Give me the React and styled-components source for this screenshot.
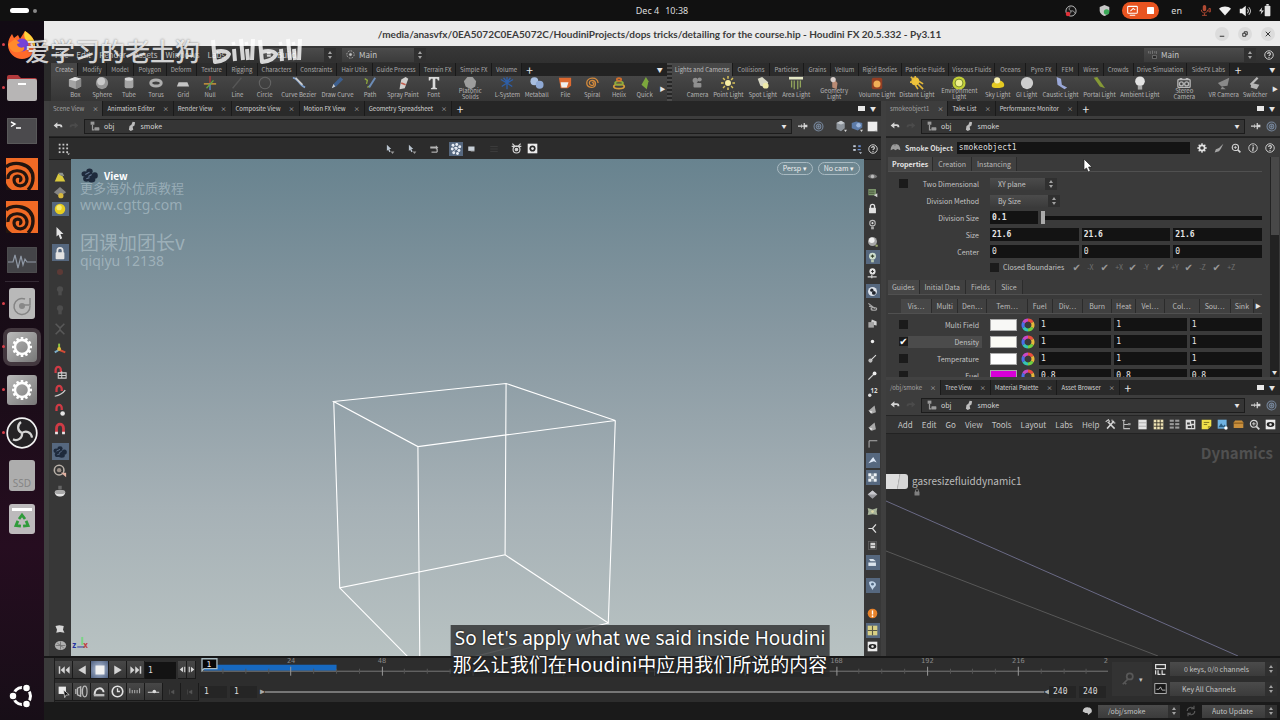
import React from "react";
import styled, { createGlobalStyle, css } from "styled-components";

const Global = createGlobalStyle`
  *, *::before, *::after { box-sizing: border-box; }
  body { margin: 0; background: #1a1a1a; }
  button, input, select { font: inherit; color: inherit; margin: 0; padding: 0; border: 0; border-radius: 0; background: none; }
  button, select { appearance: none; cursor: default; }
  a { color: inherit; text-decoration: none; }
`;

const ui = '"Noto Sans CJK SC", "Noto Sans", sans-serif';
const mono = '"DejaVu Sans Mono", monospace';

/* ---------- icons ---------- */
const L = "#d4d4d4";
const glyphs = {
  back: <path d="M1 7l6-5v3h4c3 0 4 2 4 5h-3c0-2-1-2-2-2H7v4z" fill={L} />,
  fwd: <path d="M15 7L9 2v3H5C2 5 1 7 1 10h3c0-2 1-2 2-2h3v4z" fill="#4b4b4b" />,
  obj: <g fill="#9a9a9a"><rect x="1" y="1" width="6" height="5" /><path d="M3 6v9h4v-2H5V6z" /><rect x="7" y="10" width="8" height="5" rx="1" /></g>,
  smoke: <path d="M9 1l4 1-1 5-3 2 1 5-4 2-3-2 1-6 3-2z" fill="#bdbdbd" />,
  pin: <path d="M0 7h5V5l1 0v2h3V3l2 0v3h4v4h-4v3H9V9H6v2H5V9H0z" fill={L} />,
  target: <g fill="none" stroke="#75859a" strokeWidth="1.6"><circle cx="8" cy="8" r="6.5" /><circle cx="8" cy="8" r="3.4" /><circle cx="8" cy="8" r="1" fill="#b9c6d6" /></g>,
  boxc: <g><path d="M2 4l6-3 5 3v7l-5 4-6-3z" fill="#8d949c" /><path d="M2 4l6 2 5-2-5-3z" fill="#c4c9ce" /><path d="M12 13h4l-2 3z" fill={L} /></g>,
  boxb: <g><path d="M1 4l6-2 8 2v6l-6 4-8-3z" fill="#5c7ba8" /><circle cx="10" cy="7" r="3" fill="#9db7dd" /><path d="M12 13h4l-2 3z" fill={L} /></g>,
  white: <g><rect x="1" y="1" width="14" height="14" fill="#ededed" /><path d="M11 14h5l-2 2z" fill="#888" /></g>,
  grid9: <g fill="#c9c9c9">{[1, 6, 11].map(y => [1, 6, 11].map(x => <rect key={x + "-" + y} x={x} y={y} width="2.4" height="2.4" />))}<path d="M12 14h4l-2 2z" /></g>,
  help: <g><circle cx="8" cy="8" r="6.8" fill="none" stroke={L} strokeWidth="1.5" /><path d="M5.8 6.4C5.8 3.5 10.3 3.7 10.3 6.3 10.3 8 8 7.8 8 9.7" fill="none" stroke={L} strokeWidth="1.8" /><rect x="7.1" y="11" width="1.8" height="1.8" fill={L} /></g>,
  info: <g><circle cx="8" cy="8" r="6.8" fill="none" stroke={L} strokeWidth="1.4" /><rect x="7.2" y="3.5" width="2" height="2" fill={L} /><path d="M8.6 6.5L7.5 12.5" stroke={L} strokeWidth="2" /></g>,
  search: <g fill="none" stroke={L}><circle cx="7" cy="7" r="5" strokeWidth="1.8" /><path d="M11 11l4 4" strokeWidth="2.5" /><path d="M4.5 7h5M7 4.5v5" strokeWidth="1.3" /></g>,
  gear: <g><circle cx="8" cy="8" r="4.2" fill="none" stroke="#e2e2e2" strokeWidth="2.6" />{[0, 45, 90, 135].map(a => <path key={a} d="M8 .5v2.8M8 12.7v2.8" stroke="#e2e2e2" strokeWidth="2.2" transform={`rotate(${a} 8 8)`} />)}</g>,
  brush: <path d="M15 1L8 8 3 10l-2 5 7-2 3-4z" fill="#a5a5a5" />,
  hat: <g fill="#9b9b9b"><path d="M1 12c0-6 3-9 7-9s7 3 7 9l-4-2-3 2-3-2z" /><path d="M5 3l2 3 3-3z" fill="#777" /></g>,
  arrow: <path d="M4 1l8 8H8.500l2 5-2.200 1-2-5L4 12z" fill="#e3e3e3" />,
  arrowd: <g><path d="M3 1l7 7H7l2 4-2 1-2-4-2 2z" fill="#b9c4cf" /><path d="M9 12h6l-3 4z" fill="#999" /></g>,
  path: <g><path d="M2 4h9v-2l4 4-4 3V7H2z" fill="#b5b5b5" /><path d="M13 8v5H4" stroke={L} fill="none" strokeWidth="1.5" /></g>,
  dots: <g fill="#e9eef5">{[[4, 3], [9, 2], [13, 5], [3, 8], [8, 7], [12, 10], [5, 13], [10, 14]].map(([x, y]) => <circle key={x} cx={x} cy={y} r="1.9" />)}<path d="M3 13L13 4M4 4l8 8" stroke="#cfd6df" /></g>,
  screen: <g><rect x="2" y="4" width="10" height="7" fill="#c7cfd7" /><path d="M6 12h6" stroke="#8a8a8a" /></g>,
  faint: <g stroke="#3d3d3d" strokeWidth="1.5"><path d="M2 4h12M2 8h12M2 12h12" /></g>,
  bug: <g stroke={L} strokeWidth="1.7" fill="none"><path d="M2 1l4 4M14 1l-4 4M1 5h14" /><circle cx="8" cy="9.5" r="5" /><circle cx="8" cy="9.5" r="1.8" fill={L} /></g>,
  eyebox: <g><rect x="1" y="1" width="14" height="14" fill="#ececec" /><ellipse cx="8" cy="8" rx="5.5" ry="3.5" fill="#222" /><circle cx="8" cy="8" r="1.8" fill="#ececec" /></g>,
  gearbox: <g><rect x="1" y="1" width="14" height="14" fill="#ececec" /><circle cx="8" cy="8" r="4.5" fill="#2b2b2b" /><circle cx="8" cy="8" r="2" fill="#ececec" /></g>,
  tree: <g stroke="#bdbdbd" strokeWidth="1.5" fill="none"><path d="M4 2v12h9M4 8h9M2 2h4" /><rect x="10" y="6" width="4" height="3" fill="#999" stroke="none" /></g>,
  treeb: <g fill="#c2cbd8"><rect x="2" y="2" width="4" height="3" /><rect x="10" y="2" width="4" height="3" fill="#6b8fd0" /><rect x="2" y="8" width="4" height="3" /><rect x="9" y="8" width="5" height="2" fill="#6b8fd0" /><path d="M11 13h5l-2 3z" /></g>,
  wrench: <g stroke={L} fill="none"><path d="M4 4l10 10M13 3L3 14" strokeWidth="2.2" /><path d="M1 4l4-3 2 3M10 1l1 4 4 1" strokeWidth="1.5" /></g>,
  list: <g><rect x="2" y="1" width="12" height="14" fill="#e4e4e4" /><path d="M2 5.5h12M2 10.5h12" stroke="#999" /></g>,
  ygrid: <g><rect x="1" y="1" width="14" height="14" fill="#eee3b4" /><path d="M1 5.5h14M1 10.5h14M5.500 1v14M10.500 1v14" stroke="#39342a" strokeWidth="1.3" /></g>,
  dgrid: <g fill="#9c9c9c">{[1, 6, 11].map(y => [1, 9].map(x => <rect key={x + "-" + y} x={x} y={y} width="6" height="3" />))}</g>,
  photo: <g><rect x="1" y="1" width="14" height="14" fill="#dcdcdc" /><path d="M3 5h4v3H3zM9 3h4v4H9zM4 10h5v3H4zM10 9h3v4h-3z" fill="#3c3c3c" /></g>,
  note: <g><path d="M1 1h14v9l-5 5H1z" fill="#f0e04a" /><path d="M4 5h8M4 8h5" stroke="#78701e" strokeWidth="1.3" /><path d="M10 15v-5h5z" fill="#a99b25" /></g>,
  image: <g><rect x="1" y="1" width="13" height="13" fill="#6fb3e3" /><path d="M2 12l4-6 3 4 2-2 3 4z" fill="#2c5d80" /><circle cx="13" cy="13" r="2.5" fill="#fff" /></g>,
  crate: <g><path d="M1 5l2-3h10l2 3v8H1z" fill="#c98f3c" /><path d="M1 6h14" stroke="#7d5318" strokeWidth="1.5" /></g>,
  lock: <g><rect x="3" y="7" width="10" height="8" rx="1" fill="#e2e2e2" /><path d="M5 8V5c0-4 6-4 6 0v3" fill="none" stroke="#e2e2e2" strokeWidth="2" /></g>,
  eye: <g><path d="M1 8c3-5 11-5 14 0-3 4-11 4-14 0z" fill="#777" /><circle cx="8" cy="8" r="2.5" fill="#bbb" /></g>,
  leafy: <g fill="#7f9a6e"><rect x="2" y="3" width="11" height="9" /><path d="M3 6h8M3 9h8" stroke="#3e4a35" strokeWidth="1.3" /><path d="M10 12l5 3V9z" fill={L} /></g>,
  bulb: <g><circle cx="8" cy="6" r="4" fill="none" stroke="#bcbcbc" strokeWidth="1.5" /><path d="M6 11h4v4H6z" fill="#a8a8a8" /><circle cx="8" cy="6" r="1.5" fill="#ddd" /></g>,
  ball: <g><circle cx="8" cy="8" r="6.5" fill="#a7a7a7" /><circle cx="7" cy="6" r="4" fill="#efefef" /><circle cx="14" cy="14" r="1.8" fill="#9aa76c" /></g>,
  bulbp: <g><circle cx="8" cy="6" r="5" fill="#cfe0cf" /><path d="M8 3.5v5M5.500 6h5" stroke="#34402c" strokeWidth="1.6" /><path d="M6 11h4v4H6z" fill="#b9c8b0" /></g>,
  bulbw: <g><circle cx="8" cy="5" r="4.5" fill="#e6e6e6" /><path d="M8 3v4M6 5h4" stroke="#222" strokeWidth="1.3" /><path d="M1 13h13M7 10v5" stroke="#d2d2d2" strokeWidth="1.8" /></g>,
  balls: <g><circle cx="8" cy="8" r="6.5" fill="#dce2ea" /><circle cx="7" cy="6" r="2.4" fill="#20242c" /><circle cx="10" cy="10" r="2.8" fill="#20242c" /></g>,
  cut: <g stroke="#a9a9a9" strokeWidth="1.7" fill="none"><path d="M2 2l9 7M3 6l9 3" /><ellipse cx="10" cy="10" rx="4" ry="2" /></g>,
  cubes: <g fill="#a5a5a5"><rect x="2" y="6" width="8" height="8" /><path d="M7 2l7 3v6l-4-1V6H6z" fill="#d0d0d0" /></g>,
  dot: <circle cx="8" cy="8" r="2.5" fill="#eee" />,
  tick: <g><circle cx="5" cy="11" r="3" fill="#bbb" /><path d="M6 10l7-7" stroke="#ddd" strokeWidth="1.5" /></g>,
  dropper: <g><path d="M2 14l8-8" stroke="#ccc" strokeWidth="2" /><circle cx="11" cy="5" r="2.8" fill="#eee" /></g>,
  n12: <g><circle cx="4" cy="12" r="2.5" fill="#ddd" /><text x="5" y="9" fontSize="9" fontWeight="700" fill="#ddd" fontFamily="Noto Sans">12</text></g>,
  cone: <g fill="#aaa"><path d="M3 9l8-7 2 10-6 2z" /><path d="M2 9l6 2-2 3z" fill="#e3e3e3" /></g>,
  corner: <path d="M3 14V4h12" stroke="#b3b3b3" strokeWidth="1.4" fill="none" />,
  plane: <path d="M2 12L9 3l5 8-4-2z" fill="#dfe9f7" />,
  check: <g fill="#eef2f6"><rect x="2" y="2" width="12" height="12" fill="#8b98a5" /><rect x="2" y="2" width="4" height="4" /><rect x="10" y="2" width="4" height="4" /><rect x="6" y="6" width="4" height="4" /><rect x="2" y="10" width="4" height="4" /><rect x="10" y="10" width="4" height="4" /></g>,
  diamond: <g><path d="M8 2l7 6-7 6-7-6z" fill="#9a9a9f" /><path d="M8 2l7 6H1z" fill="#c9c9ce" /></g>,
  pillow: <g fill="#a9b59b"><path d="M1 3l7 2 7-2-1 5 1 5-7-1-7 1 1-5z" /><circle cx="8" cy="8" r="2" fill="#ded9a6" /></g>,
  axis: <path d="M2 8h6L13 2M8 8l5 6" stroke="#ddd" strokeWidth="1.8" fill="none" />,
  frame: <g><rect x="2" y="2" width="12" height="12" fill="none" stroke="#666" /><rect x="5" y="4" width="7" height="8" fill="#d4d4d4" /><path d="M5 8h7" stroke="#555" /></g>,
  cam: <g fill="#dbe4ec"><rect x="2" y="8" width="11" height="5" /><path d="M3 3h6l4 3H5z" /></g>,
  tag: <g><path d="M3 3c4-3 10 0 10 3 0 4-4 4-5 9-1-4-5-6-5-12z" fill="#c3d6ea" /><circle cx="8" cy="6" r="2" fill="#526a84" /></g>,
  warn: <g><circle cx="8" cy="8" r="7" fill="#e8822a" /><path d="M8 3.5v6" stroke="#fff" strokeWidth="2" /><circle cx="8" cy="12" r="1.3" fill="#fff" /></g>,
  panes: <g><rect x="1" y="1" width="14" height="14" fill="#d8cf84" /><path d="M8 1v14M1 8h14" stroke="#5b5a45" strokeWidth="1.6" /></g>,
  ylamp: <g><path d="M2 13l4-9 5 3 3 6z" fill="#d9c93d" /><path d="M6 3h5l2 4-5-1z" fill="#8f948e" /></g>,
  ydia: <g><path d="M8 1l7 6-7 5-7-5z" fill="#848484" /><circle cx="9" cy="11" r="3" fill="#d8b93d" /></g>,
  yball: <g><circle cx="8" cy="8" r="6" fill="#e7cd20" /><circle cx="7" cy="6.5" r="3" fill="#f8ec74" /></g>,
  reddot: <circle cx="8" cy="8" r="3.5" fill="#5c3a36" />,
  greydot: <g fill="#4d4d4d"><circle cx="8" cy="6" r="3.5" /><path d="M6 9h4v4H6z" /></g>,
  net: <path d="M3 2l5 5 5-5M3 14l5-5 5 5M8 7v2" stroke="#585858" strokeWidth="1.8" fill="none" />,
  gizmo: <g fill="none" strokeWidth="2.2"><path d="M7 10V3" stroke="#8fc341" /><path d="M7 10l7 3" stroke="#d04a36" /><path d="M7 10l-5 3" stroke="#7cadc9" /><circle cx="7" cy="9" r="2.2" fill="#e0bb3d" stroke="none" /></g>,
  magnet: <g><path d="M4 13V7c0-6 8-6 8 0v6" fill="none" stroke="#cf3b45" strokeWidth="3.2" /><path d="M2.4 11h3.200v3H2.400zM10.400 11h3.200v3h-3.200z" fill="#e5e5e5" /></g>,
  magnetg: <g><path d="M3 9V6c0-5 6-5 6 0v3" fill="none" stroke="#cf3b45" strokeWidth="2.6" /><path d="M6 9h9v6H6zM10 7v8M6 12h9" fill="none" stroke="#cfcfcf" strokeWidth="1.2" /></g>,
  magnetl: <g><path d="M4 9V6c0-5 6-5 6 0v2" fill="none" stroke="#cf3b45" strokeWidth="2.6" /><path d="M2 14c5-1 9-3 12-7" fill="none" stroke="#cfcfcf" strokeWidth="1.4" /></g>,
  magnetd: <g><path d="M4 9V6c0-5 6-5 6 0v2" fill="none" stroke="#cf3b45" strokeWidth="2.6" /><circle cx="11" cy="12" r="2.6" fill="#e5e5e5" /></g>,
  view: <g fill="#1e2a3c"><ellipse cx="8" cy="4" rx="3" ry="2.500" /><ellipse cx="3.500" cy="6.500" rx="3" ry="2.500" /><ellipse cx="13" cy="8" rx="2.800" ry="3" /><ellipse cx="5" cy="11" rx="3" ry="2.800" /><ellipse cx="10" cy="12" rx="3.500" ry="2.500" /><circle cx="8" cy="8" r="3" /><path d="M4 7l4-2M7 9l3-2M5 11l3-1" stroke="#61758f" /></g>,
  ring: <g><circle cx="7" cy="7" r="5.5" fill="none" stroke="#b9b1a8" strokeWidth="1.8" /><circle cx="7" cy="7" r="2.5" fill="#9b8f86" /><path d="M9 10h6v5z" fill="#e0b0a0" /></g>,
  bowl: <g><path d="M2 9h12c0 7-12 7-12 0z" fill="#e4e4e4" /><ellipse cx="8" cy="9" rx="6" ry="2.5" fill="#a8a8a8" /><rect x="6" y="2" width="4" height="4" fill="#666" /></g>,
  cloth: <path d="M2 4l5-1 6 1-1 5 2 4-6-1-5 1 1-4z" fill="#d5d5d5" />,
  disc: <g><ellipse cx="8" cy="8" rx="7" ry="5.5" fill="#b0b0b0" /><path d="M2 8h12M8 3v10M4 5l8 6" stroke="#6e6e6e" /></g>,
  first: <path d="M1 3h2v10H1zM9 3v10L3.500 8zM15.500 3v10L10 8z" fill={L} />,
  last: <path d="M13 3h2v10h-2zM7 3v10l5.500-5zM.5 3v10L6 8z" fill={L} />,
  rev: <path d="M13 2v12L3 8z" fill={L} />,
  play: <path d="M3 2v12l10-6z" fill={L} />,
  stop: <rect x="2" y="2" width="12" height="12" fill="#f1f1f1" />,
  stepb: <path d="M9 3v10L3 8zM11 3h2v10h-2z" fill={L} />,
  stepf: <path d="M7 3v10l6-5zM3 3h2v10H3z" fill={L} />,
  flag: <g><rect x="2" y="2" width="9" height="9" fill="#ececec" /><path d="M8 6l7 6-4 .5-1.500 3z" fill="#111" stroke="#eee" strokeWidth=".8" /></g>,
  sound: <g fill="none" stroke="#bbb" strokeWidth="1.5"><path d="M1 5v6" /><path d="M3 4l4-2v12l-4-2z" fill="#555" /><ellipse cx="12" cy="8" rx="2.800" ry="6.500" /><path d="M9 5v6" /></g>,
  loop: <g><path d="M2 12C2 2 13 2 13 9" fill="none" stroke="#e1e1e1" strokeWidth="2.4" /><path d="M1 11h13v3H1z" fill="#bcbcbc" /></g>,
  clock: <g><circle cx="8" cy="8" r="6.5" fill="none" stroke="#e1e1e1" strokeWidth="2" /><path d="M8 4v4h3" fill="none" stroke="#e1e1e1" strokeWidth="1.6" /></g>,
  ticks: <path d="M1 4v6M4 6v4M7 6v4M10 6v4M13 4v6" stroke="#aaa" strokeWidth="1.3" />,
  slide: <g><path d="M1 9h14" stroke="#bbb" strokeWidth="1.5" /><circle cx="9" cy="8" r="2.2" fill="#ddd" /></g>,
  dimb: <path d="M3 3v10M12 4v8L6 8z" stroke="#555" fill="#555" />,
  key: <g stroke="#585858" strokeWidth="2" fill="none"><circle cx="10" cy="5" r="3.5" /><path d="M8 8l-6 6M4 12l2 2" /></g>,
  keybox: <g><rect x="1" y="2" width="14" height="12" fill="#181818" stroke="#ccc" /><path d="M3 9h3l2-3 2 4h4" stroke="#ccc" fill="none" /></g>,
  chan: <g fill="none" stroke="#ddd" strokeWidth="1.5"><path d="M2 2h12v5H2zM2 9v5M5 9v5h3M10 9v5h4" /></g>,
  cloud: <path d="M1 8c0-5 5-7 8-6 5 0 6 4 5 7l-5 4-1-3H5z" fill="#c6c6c6" />,
  refresh: <path d="M3 8a5 5 0 019-3M13 8a5 5 0 01-9 3M12 1v4H8M4 15v-4h4" fill="none" stroke="#5a5a5a" strokeWidth="1.5" />,
  wheel: <g fill="none" strokeWidth="3"><path d="M8 3a5 5 0 014.300 2.500" stroke="#e8503c" /><path d="M12.300 5.500a5 5 0 010 5" stroke="#e6b83a" /><path d="M12.300 10.500A5 5 0 018 13" stroke="#6fcf3f" /><path d="M8 13a5 5 0 01-4.300-2.500" stroke="#35c4b4" /><path d="M3.700 10.500a5 5 0 010-5" stroke="#4b6ee8" /><path d="M3.700 5.500A5 5 0 018 3" stroke="#c848c8" /></g>,
  desk: <g fill="none" stroke="#c5c5c5" strokeWidth="1.3"><circle cx="8" cy="8" r="6.5" strokeDasharray="3 2" /><circle cx="8" cy="8" r="2" fill="#c5c5c5" /></g>,
  hat2: <path d="M1 2v4M4 2v5M8 1v6M12 2v4M15 2v5M8 10h7v5H8z" stroke="#999" fill="#222" />,
  /* shelf tools */
  s_box: <g><path d="M1 4l7-3 7 2v9l-6 3-8-3z" fill="#a3a3a3" /><path d="M1 4l7-3 7 2-6 3z" fill="#e1e1e1" /><path d="M9 6l6-3v9l-6 3z" fill="#888" /></g>,
  s_ball: <g><circle cx="8" cy="8" r="7" fill="#969696" /><circle cx="7" cy="6" r="4.5" fill="#c9c9c9" /></g>,
  s_tube: <g><rect x="3" y="3" width="10" height="11" rx="2" fill="#a4a4a4" /><ellipse cx="8" cy="3.5" rx="5" ry="2" fill="#d5d5d5" /></g>,
  s_torus: <ellipse cx="8" cy="8" rx="6" ry="3.5" fill="none" stroke="#aeaeae" strokeWidth="3.4" />,
  s_grid: <path d="M3 7h10l2 5H1z" fill="#c5c5c5" />,
  s_null: <g strokeWidth="1.6"><path d="M8 0v9" stroke="#b2403a" /><path d="M1 9h14" stroke="#d19a3a" /><path d="M8 8v8" stroke="#5a86c9" /><path d="M4 14l8-9" stroke="#63a543" /></g>,
  s_line: <path d="M3 14L13 2" stroke="#575757" strokeWidth="1.4" />,
  s_circle: <circle cx="8" cy="8" r="6.5" fill="none" stroke="#646464" strokeWidth="1.2" />,
  s_curve: <g fill="none" strokeWidth="2"><path d="M1 2c6 0 7 9 14 11" stroke="#7e9fcb" /><path d="M4 2l8 8" stroke="#d0d0d0" /></g>,
  s_pen: <g><path d="M2 14L4 9l8-8 3 3-8 8z" fill="#3d5f8e" /><path d="M2 14l2-5 2 3z" fill="#ccc" /></g>,
  s_path: <g><path d="M2 3l3 2-1 4M5 13l3-2" stroke="#8fa83f" fill="none" strokeWidth="1.5" /><path d="M7 13l7-11" stroke="#6c8cb6" strokeWidth="2.2" /></g>,
  s_spray: <g><path d="M6 4l5-3 3 2-4 11-6 1z" fill="#d0cfcd" /><path d="M6 8l5 2" stroke="#c25e4e" strokeWidth="2" /></g>,
  s_font: <path d="M2 1h12v4h-1.500L11.500 3H9.500v10l2 1v1h-7v-1l2-1V3h-2l-1 2H2z" fill="#dadada" />,
  s_plat: <path d="M5 1h6l4 5-1 6-5 3-6-3-2-6z" fill="#9d9d9d" />,
  s_lsys: <path d="M8 1v14M1 4l7 4 7-4M2 12l6-4 6 4M4 2l4 5 4-5" stroke="#2e5fa8" strokeWidth="1.5" fill="none" />,
  s_meta: <g fill="#a9bfe0"><circle cx="5" cy="6" r="4.5" /><circle cx="11" cy="10" r="4.5" fill="#8fa9d4" /></g>,
  s_file: <g><path d="M1 2h14v9l-4 3H3z" fill="#dd6a31" /><path d="M3 7h9l-2 6H4z" fill="#efefef" /></g>,
  s_spiral: <path d="M8 8c1-1 2 0 2 1 0 3-5 2-5-1 0-4 7-4 7 1 0 6-10 5-10-1 0-7 12-8 13 0" fill="none" stroke="#d48a3c" strokeWidth="1.5" />,
  s_helix: <g fill="none" strokeWidth="2"><ellipse cx="8" cy="12" rx="6" ry="2.5" stroke="#d49b3a" /><ellipse cx="8" cy="8" rx="4.5" ry="2" stroke="#8fae3d" /><ellipse cx="8" cy="4" rx="2.5" ry="1.5" stroke="#d06f2e" /></g>,
  s_quick: <path d="M9 1l3 5-2 9-6-5z" fill="#7da83d" />,
  l_cam: <g fill="#8f8f8f"><circle cx="6" cy="5" r="3" /><circle cx="11" cy="4" r="2.4" /><rect x="4" y="8" width="9" height="5" rx="1" /></g>,
  l_point: <g><circle cx="8" cy="8" r="3.4" fill="#f7eda5" />{[0, 45, 90, 135].map(a => <path key={a} d="M8 0v3M8 13v3" stroke="#d9c25a" strokeWidth="1.7" transform={`rotate(${a} 8 8)`} />)}</g>,
  l_spot: <g><path d="M2 3l5-2 7 6-3 6-6-2z" fill="#d8d8c6" /><circle cx="11" cy="11" r="3.4" fill="#eee9a9" /></g>,
  l_area: <g><rect x="0" y="1" width="16" height="3" fill="#e3e6c3" /><path d="M3 5v8M6 5v10M10 5v10M13 5v8" stroke="#91a45b" strokeWidth="1.5" /></g>,
  l_geo: <g><path d="M6 1l6 7-1 7-5-2z" fill="#b98a73" /><circle cx="7" cy="4" r="3" fill="#d8cfcc" /></g>,
  l_vol: <g><rect x="2" y="2" width="12" height="13" rx="2" fill="#943f24" /><circle cx="8" cy="9" r="4" fill="#f0ae57" /></g>,
  l_dist: <g><circle cx="6" cy="6" r="4.5" fill="#efc33a" /><path d="M9 9l6 6M10 6l5 3M6 10l3 5M1 1l3 3M6 0v3M0 7h3" stroke="#e5b93a" strokeWidth="1.8" /></g>,
  l_env: <g><circle cx="8" cy="8" r="7.5" fill="#c2cf37" /><circle cx="8" cy="8" r="4.5" fill="#eef08e" stroke="#6c7b22" /></g>,
  l_sky: <g><path d="M1 12c-1-5 4-6 5-4 2-5 10-2 9 3 0 3-13 4-14 1z" fill="#e5ca22" /><circle cx="7" cy="5" r="3.5" fill="#f7efb0" /></g>,
  l_gi: <circle cx="8" cy="8" r="7" fill="#cecece" />,
  l_cau: <path d="M3 1l5 2 1 7 6 3-3 2-8-5z" fill="#9aa8d8" />,
  l_por: <path d="M2 2l4-1 9 13-6-2z" fill="#869a36" />,
  l_amb: <g><circle cx="8" cy="6" r="5.5" fill="#e2e2e2" /><rect x="5.5" y="11" width="5" height="4.5" fill="#a9a9a9" /></g>,
  l_st: <g fill="none" stroke="#b8b8b8" strokeWidth="1.5"><rect x="1" y="4" width="14" height="9" rx="1" /><circle cx="5" cy="9" r="2.2" /><circle cx="11" cy="9" r="2.2" /><path d="M3 3h3M10 3h3" /></g>,
  l_vr: <g fill="#8a8a8a"><path d="M1 8l13-6-2 9-7 1z" /><path d="M6 12l4 3H4z" /></g>,
  l_sw: <g><path d="M3 10L11 2" stroke="#bcbcbc" strokeWidth="2.6" /><path d="M4 8l9 2-3 5-7-2z" fill="#b4b4b4" /></g>,
};
const Svg = styled.svg`display: block; flex: none; width: ${p => p.$s}px; height: ${p => p.$s}px;`;
const Icon = ({ n, s = 10 }) => <Svg $s={s} viewBox="0 0 16 16" aria-hidden="true">{glyphs[n]}</Svg>;

/* ---------- frame ---------- */
const Page = styled.div`
  position: relative; display: flex; flex-direction: column; min-height: 100vh; overflow: hidden;
  font: 7px/10px ${ui}; color: #c4c4c4; background: #1a1a1a;
`;
const TopBar = styled.header`
  display: grid; grid-template-columns: minmax(0, 1fr) auto minmax(0, 1fr); align-items: center; height: 21px; padding: 0 8px 0 10px;
  background: #111; color: #dedede; font: 9px/12px "Noto Sans", sans-serif;
`;
const Workspaces = styled.div`display: flex; align-items: center; gap: 4px;
  &::before { content: ""; width: 19px; height: 5px; border-radius: 3px; background: #fff; }
  &::after { content: ""; width: 4px; height: 4px; border-radius: 2px; background: #888; }
`;
const Clock = styled.time`display: flex; gap: 6px; padding-left: 42px;`;
const Tray = styled.div`display: flex; align-items: center; justify-content: flex-end; gap: 8px;`;
const TrayIcon = styled(Svg)`margin-right: ${p => p.$gap || 0}px;`;
const Language = styled.button`margin-right: 10px;`;
const Recording = styled.button`display: flex; align-items: center; justify-content: center; gap: 9px; width: 37px; height: 17px; margin: 0 4px; border-radius: 9px; background: #e95420;`;
const Body = styled.div`flex: 1; display: flex; min-height: 0;`;
const Dock = styled.nav`
  flex: none; display: flex; flex-direction: column; align-items: center; width: 44px; padding: 2px 0 3px;
  background: linear-gradient(#120b14, #190c17 50%, #260d20 75%, #170e17);
`;
const DockItem = styled.button`
  position: relative; display: flex; align-items: center; justify-content: center; width: 44px; height: 43px;
  ${p => p.$running && css`&::before { content: ""; position: absolute; left: 2px; top: 20px; width: 3px; height: 3px; border-radius: 2px; background: #d8404a; }`}
  ${p => p.$active && css`> svg { box-sizing: content-box; padding: 4px; border-radius: 8px; background: #43383f; }`}
`;
const DockRule = styled.hr`width: 34px; height: 1px; margin: 0; border: 0; background: #342a34;`;
const DockEnd = styled.div`margin-top: auto;`;
const AppWindow = styled.main`flex: 1; display: flex; flex-direction: column; min-width: 0; background: #3a3a3a;`;
const TitleBar = styled.div`
  display: grid; grid-template-columns: 1fr auto 1fr; align-items: center; height: 25px; padding-right: 5px;
  background: #ebebeb; color: #3b3b3b; font: bold 10px/14px Lato, "Noto Sans", sans-serif; white-space: nowrap;
`;
const WindowButtons = styled.div`grid-column: 3; display: flex; justify-content: flex-end; gap: 9px;`;
const WindowButton = styled.button`display: grid; place-items: center; width: 14px; height: 14px; border-radius: 7px; background: #dcdcdc;`;
const Title = styled.h1`grid-column: 2; margin: 0; font: inherit;`;

/* ---------- main menu ---------- */
const MenuBar = styled.div`display: flex; align-items: center; height: 17px; padding: 0 6px 0 11px; background: linear-gradient(#383838, #303030); font-size: 8px;`;
const MenuGroup = styled.div`display: flex; gap: 8px; min-width: 205px;`;
const MenuButton = styled.button`white-space: nowrap;`;
const Combo = styled.label`
  display: flex; align-items: center; gap: 4px; height: ${p => p.$h || 14}px; width: ${p => p.$w}px; padding: 0 0 0 4px;
  margin-right: ${p => p.$mr || 0}px; background: linear-gradient(#4b4b4b, #3b3b3b); color: #c4c4c4;
  > select { flex: 1; min-width: 0; padding-left: ${p => p.$pad || 0}px; white-space: nowrap; line-height: 12px; }
`;
const Stepper = () => <Svg $s={8} viewBox="0 0 8 8"><path d="M4 0l2 3H2zM4 8l2-3H2z" fill="#a2a2a2" /></Svg>;
const StepBox = styled.span`display: grid; place-items: center; width: 12px; height: 100%; background: #303030;`;
const Spacer = styled.span`flex: 1;`;
const Select = ({ label, value, icon, ...r }) => (
  <Combo {...r}>{icon && <Icon n={icon} s={9} />}<select aria-label={label} defaultValue={value}><option>{value}</option></select><StepBox><Stepper /></StepBox></Combo>
);

/* ---------- shelves ---------- */
const Shelves = styled.div`display: grid; grid-template-columns: 624fr 5fr 608fr; height: 38px; background: #2b2b2b; font-size: 6px; line-height: 8px;`;
const Shelf = styled.section`display: flex; flex-direction: column; min-width: 0; padding-left: ${p => p.$pl || 0}px;`;
const ShelfTabs = styled.div`display: flex; height: 13px; background: #222;`;
const ShelfTab = styled.button`
  flex: ${p => p.$w} 1 0; min-width: 0; white-space: nowrap; border-right: 1px solid #191919;
  background: ${p => (p.$on ? "#474747" : "#2c2c2c")}; color: ${p => (p.$on ? "#bdbdbd" : "#a9a9a9")};
`;
const ShelfFill = styled.span`flex: ${p => p.$w} 1 0;`;
const ShelfMark = styled.button`flex: ${p => p.$w} 1 0; min-width: 0; font-size: ${p => (p.$big ? 12 : 6)}px; color: #e4e4e4;`;
const Tools = styled.div`flex: 1; display: flex; padding-left: 11px; background: linear-gradient(#464646, #363636);`;
const Tool = styled.button`
  flex: ${p => p.$w} 1 0; min-width: 0; display: flex; flex-direction: column; align-items: center; justify-content: flex-start; color: #b5b5b5;
  > span { white-space: nowrap; text-align: center; line-height: ${p => (p.$two ? 6 : 10)}px; margin-top: ${p => (p.$two ? -2 : 0)}px; }
`;
const Grip = styled.span`background: repeating-linear-gradient(#4c4c4c 0 2px, #272727 2px 4px);`;
const leftTabs = [["Create", 27], ["Modify", 28], ["Model", 27], ["Polygon", 32], ["Deform", 30], ["Texture", 30], ["Rigging", 30], ["Characters", 39], ["Constraints", 40], ["Hair Utils", 36], ["Guide Process", 47], ["Terrain FX", 36], ["Simple FX", 36], ["Volume", 29]];
const rightTabs = [["Lights and Cameras", 61], ["Collisions", 37], ["Particles", 34], ["Grains", 27], ["Vellum", 27], ["Rigid Bodies", 43], ["Particle Fluids", 48], ["Viscous Fluids", 46], ["Oceans", 31], ["Pyro FX", 30], ["FEM", 22], ["Wires", 24], ["Crowds", 30], ["Drive Simulation", 54], ["SideFX Labs", 43]];
const leftTools = [["Box", "s_box", 27], ["Sphere", "s_ball", 27], ["Tube", "s_tube", 27], ["Torus", "s_torus", 28], ["Grid", "s_grid", 27], ["Null", "s_null", 27], ["Line", "s_line", 28], ["Circle", "s_circle", 27], ["Curve Bezier", "s_curve", 42], ["Draw Curve", "s_pen", 36], ["Path", "s_path", 30], ["Spray Paint", "s_spray", 36], ["Font", "s_font", 26], ["Platonic\nSolids", "s_plat", 48], ["L-System", "s_lsys", 27], ["Metaball", "s_meta", 32], ["File", "s_file", 26], ["Spiral", "s_spiral", 28], ["Helix", "s_helix", 26], ["Quick", "s_quick", 26]];
const rightTools = [["Camera", "l_cam", 28], ["Point Light", "l_point", 34], ["Spot Light", "l_spot", 35], ["Area Light", "l_area", 32], ["Geometry\nLight", "l_geo", 44], ["Volume Light", "l_vol", 42], ["Distant Light", "l_dist", 38], ["Environment\nLight", "l_env", 47], ["Sky Light", "l_sky", 30], ["GI Light", "l_gi", 28], ["Caustic Light", "l_cau", 40], ["Portal Light", "l_por", 38], ["Ambient Light", "l_amb", 43], ["Stereo\nCamera", "l_st", 46], ["VR Camera", "l_vr", 33], ["Switcher", "l_sw", 30]];
const ShelfSet = ({ tabs, tools, pl, fill }) => (
  <Shelf $pl={pl}>
    <ShelfTabs>{tabs.map(([t, w], i) => <ShelfTab key={t} $w={w} $on={i === 0}>{t}</ShelfTab>)}
      <ShelfMark $w={16} $big aria-label="Add shelf">+</ShelfMark><ShelfFill $w={fill} /><ShelfMark $w={16} aria-label="Shelf menu">▼</ShelfMark></ShelfTabs>
    <Tools>{tools.map(([t, n, w]) => {
      const [a, b] = t.split("\n");
      return <Tool key={t} $w={w} $two={!!b}><Icon n={n} s={14} /><span>{a}{b && <><br />{b}</>}</span></Tool>;
    })}<ShelfMark $w={10} aria-label="More tools">▶</ShelfMark></Tools>
  </Shelf>
);

/* ---------- panes ---------- */
const Panes = styled.div`flex: 1; display: grid; grid-template-columns: minmax(0, 832fr) minmax(0, 394fr); column-gap: 5px; min-height: 0; padding-left: 5px; background: #3f3f3f;`;
const Pane = styled.section`display: flex; flex-direction: column; min-width: 0; min-height: 0; background: #3a3a3a;`;
const PaneTabs = styled.div`display: flex; align-items: center; height: 15px; padding-right: 2px; background: #262626; font-size: 6px;`;
const PaneTab = styled.div`
  display: flex; align-items: center; height: 15px; padding: 0 4px; border-right: 1px solid #1a1a1a; white-space: nowrap;
  background: ${p => (p.$on ? "#3d3d3d" : "#2a2a2a")}; color: ${p => (p.$on ? "#a2a2a2" : "#d4d4d4")};
  > button + button { margin-left: 8px; color: #bbb; }
`;
const PlainButton = styled.button`display: grid; place-items: center; width: ${p => p.$w || 12}px; font-size: ${p => p.$fs || 7}px; color: #e4e4e4;`;
const PaneBox = styled.span`width: 7px; height: 5px; background: #e8e8e8;`;
const PathRow = styled.div`display: flex; align-items: center; height: 21px; padding: 0 3px; gap: 5px; background: #3d3d3d; border-bottom: 1px solid #252525;`;
const PathBox = styled.div`flex: 1; display: flex; align-items: center; gap: 5px; height: 15px; padding: 0 3px 0 5px; background: #353535; border: 1px solid #1c1c1c;`;
const Crumb = styled.a`display: flex; align-items: center; gap: 4px; color: #d6d6d6; margin-right: 7px;`;
const PathTail = styled.div`display: flex; gap: 5px; margin-left: 6px;`;
const Tabs = ({ items }) => (
  <PaneTabs>{items.map((t, i) => <PaneTab key={t} $on={i === 0}><button>{t}</button><button aria-label={"Close " + t}>×</button></PaneTab>)}
    <PlainButton $w={16} $fs={12} aria-label="New tab">+</PlainButton><Spacer /><PlainButton aria-label="Maximize"><PaneBox /></PlainButton><PlainButton $fs={6} aria-label="Pane menu">▼</PlainButton></PaneTabs>
);
const IconButton = styled.button`
  flex: none; display: grid; place-items: center; width: ${p => p.$w || 11}px; height: ${p => p.$h || 14}px;
  border: solid transparent; border-width: 1px 0; background: ${p => (p.$on ? "#56687f" : "none")} padding-box; margin-top: ${p => p.$mt || 0}px;
`;
const IB = ({ n, s, label, ...r }) => <IconButton aria-label={label || n} {...r}><Icon n={n} s={s} /></IconButton>;
const Path = ({ tail }) => (
  <PathRow><IB n="back" label="Back" s={10} /><IB n="fwd" label="Forward" s={10} />
    <PathBox><Crumb href="#obj"><Icon n="obj" s={10} />obj</Crumb><Crumb href="#smoke"><Icon n="smoke" s={10} />smoke</Crumb><Spacer /><PlainButton $w={8} $fs={5} aria-label="Path history">▼</PlainButton></PathBox>
    <IB n="pin" label="Pin" s={10} /><IB n="target" label="Link group" s={11} />{tail}</PathRow>
);
const ViewBar = styled.div`display: grid; grid-template-columns: 1fr auto 1fr; align-items: center; height: 22px; padding: 0 3px 0 9px; background: #2c2c2c; border-top: 1px solid #191919;`;
const ViewTools = styled.div`display: flex; align-items: center; justify-content: ${p => p.$end ? "flex-end" : "flex-start"}; gap: ${p => p.$gap || 0}px; padding-right: ${p => p.$pr || 0}px;`;
const ViewRow = styled.div`flex: 1; display: flex; min-height: 0;`;
const Strip = styled.div`flex: none; display: flex; flex-direction: column; align-items: center; width: ${p => p.$w}px; padding: ${p => p.$pt}px 0 2px; background: #373737; border-top: 1px solid #1c1c1c;`;
const StripFoot = styled.div`margin-top: auto; display: flex; flex-direction: column;`;
const Viewport = styled.div`position: relative; flex: 1; min-width: 0; overflow: hidden; background: linear-gradient(#68838f, #8798a1 35%, #a6b1b6 70%, #b8c2c2);`;
const Scene = styled.svg`position: absolute; inset: 0; width: 100%; height: 100%;`;
const ViewName = styled.div`position: absolute; left: 10px; top: 8px; display: flex; align-items: center; gap: 6px; font: bold 10px/16px ${ui}; color: #fff;`;
const ViewPills = styled.div`position: absolute; right: 4px; top: 3px; display: flex; gap: 5px;`;
const Pill = styled.button`height: 13px; padding: 0 5px; border: 1px solid #a9bac2; border-radius: 7px; background: #6e8791; color: #eee; font-size: 7px; line-height: 11px; white-space: nowrap;`;
const ViewMark = styled.div`position: absolute; left: 9px; top: 21px; color: rgba(205, 220, 226, .45); font: 13px/16px ${ui}; white-space: nowrap;
  > p { margin: 0; } > p:nth-child(even) { font: 14px/18px "Noto Sans", sans-serif; } > p:nth-child(3) { margin-top: 18px; font-size: 19px; line-height: 20px; }
`;

/* ---------- parameters ---------- */
const ParamPane = styled(Pane)`height: 276px; flex: none; overflow: hidden;`;
const NodeHead = styled.div`display: flex; align-items: center; height: 20px; padding: 0 5px 0 4px; gap: 4px; border-top: 1px solid #222; font-weight: bold; color: #dcdcdc;`;
const NameInput = styled.input`flex: 1; min-width: 0; height: 12px; padding: 0 2px; background: #141414; color: #ddd; font: 8px/12px ${mono};`;
const HeadTools = styled.div`display: flex; gap: 6px; margin-left: 2px;`;
const ParamBody = styled.div`flex: 1; display: flex; min-height: 0;`;
const ParamForm = styled.div`flex: 1; min-width: 0; padding: 0 8px 0 2px;`;
const Scroll = styled.div`flex: none; display: flex; flex-direction: column; align-items: center; width: 9px; background: #222; margin-right: 1px;
  &::before { content: ""; width: 8px; height: 78px; background: #484848; }
  > button { margin-top: auto; }
`;
const FolderTabs = styled.div`display: flex; height: 15px; border-bottom: 1px solid #505050; margin-bottom: ${p => p.$mb || 0}px; margin-top: ${p => p.$mt || 0}px;`;
const FolderTab = styled.button`padding: 0 ${p => p.$px || 5}px; white-space: nowrap; border-right: 1px solid #2b2b2b; background: ${p => (p.$on ? "#474747" : "#404040")}; font-weight: ${p => (p.$bold ? "bold" : "normal")}; color: ${p => (p.$bold ? "#e5e5e5" : "#bcbcbc")};`;
const Row = styled.div`display: grid; grid-template-columns: 20px 74px minmax(0, 1fr); align-items: center; height: ${p => p.$h || 17}px;`;
const RowLabel = styled.label`padding-right: 3px; text-align: right; white-space: nowrap; background: ${p => (p.$on ? "#4b4b4b" : "none")}; line-height: 12px;`;
const Check = styled.input`
  appearance: none; justify-self: end; width: 9px; height: 9px; display: grid; place-items: center; background: ${p => (p.$dim ? "none" : "#1b1b1b")}; color: ${p => (p.$dim ? "#999" : "#fff")};
  &:checked::after { content: "✔"; font: 10px/9px "DejaVu Sans", sans-serif; }
`;
const Fields = styled.div`display: flex; align-items: center; gap: 3px; padding-left: 8px;`;
const Field = styled.input`flex: 1; width: 0; min-width: 0; height: 13px; padding: 0 2px; background: #131313; color: #e6e6e6; font: ${p => (p.$b ? "bold" : "normal")} 8px/12px ${mono};`;
const ShortField = styled(Field)`flex: none; width: 48px;`;
const Range = styled.input`
  appearance: none; flex: 1; min-width: 0; height: 13px; background: linear-gradient(#111, #111) center / 100% 4px no-repeat;
  &::-webkit-slider-thumb { appearance: none; width: 4px; height: 13px; background: #aaa; }
`;
const Bounds = styled.div`display: flex; align-items: center; gap: 4px; padding-left: 8px; white-space: nowrap;`;
const Bound = styled.label`display: flex; align-items: center; gap: 6px; flex: none; width: 24px; color: #707070;`;
const BoundTitle = styled.label`margin-right: 4px;`;
const Swatch = styled.button`flex: none; width: 27px; height: 12px; background: ${p => p.$c}; border: 1px solid #aaa;`;

/* ---------- network ---------- */
const NetPane = styled(Pane)`flex: 1; background: #2d2d2d; border-top: 3px solid #424242;`;
const NetMenu = styled.div`display: flex; align-items: center; justify-content: space-between; height: 18px; padding: 0 4px 0 12px; background: #353535; font-size: 8px; border-bottom: 1px solid #222;`;
const NetGroup = styled.div`display: flex; align-items: center; gap: ${p => p.$gap}px;`;
const Canvas = styled.div`position: relative; flex: 1; overflow: hidden; background: #2d2d2d;`;
const Context = styled.div`position: absolute; right: 7px; top: 9px; font: bold 15px/20px ${ui}; color: #505050;`;
const NetNode = styled.div`position: absolute; left: -4px; top: 39px; display: flex; align-items: center; gap: 4px; font-size: 10px; line-height: 16px; color: #bcbcbc;
  &::before { content: ""; width: 26px; height: 15px; border-radius: 3px; background: linear-gradient(100deg, #dedede 60%, #aaa 62%, #d6d6d6 66%); }
`;
const NetLock = styled.div`position: absolute; left: 27px; top: 54px; opacity: .45;`;

/* ---------- playbar ---------- */
const Playbar = styled.div`display: flex; height: 46px; background: #2d2d2d; border-top: 2px solid #171717; padding-right: 3px;
  &::before { content: ""; width: 11px; background: #3a3a3a; border-right: 1px solid #1d1d1d; }
`;
const PlayControls = styled.div`flex: none; display: flex; flex-direction: column; gap: 4px; width: 145px; padding-top: 3px;`;
const ButtonRow = styled.div`display: flex; align-items: center;`;
const PlayButton = styled.button`display: grid; place-items: center; width: ${p => p.$w || 18}px; height: 18px; border: 1px solid #1a1a1a; border-width: 0 1px 1px 0; background: ${p => (p.$on ? "radial-gradient(#b9c6dc, #4d5f80)" : p.$dim ? "#2d2d2d" : "linear-gradient(#474747, #363636)")};`;
const FrameInput = styled.input`width: 31px; height: 17px; margin-right: 2px; padding: 0 3px; background: #131313; color: #ddd; font: 8px/16px ${mono};`;
const TimeArea = styled.div`flex: 1; min-width: 0; display: flex; flex-direction: column;`;
const Ruler = styled.svg`width: 100%; height: 25px; display: block;`;
const RangeRow = styled.div`display: flex; align-items: center; height: 20px; font: 8px/12px ${mono};
  > input[type="text"] { width: 27px; padding: 0 4px; height: 12px; background: #252525; color: #ddd; margin-right: 3px; }
`;
const RangeTrack = styled.div`flex: 1; display: flex; align-items: center; color: #aaa; font-size: 8px; &::before { content: "▶"; } &::after { content: "◀"; }
  > span { flex: 1; height: 2px; background: #777; }
`;
const KeyPanel = styled.div`flex: none; display: grid; grid-template-columns: 40px 14px 107px; align-items: center; align-content: center; gap: 5px 2px; width: 168px; padding: 0 0 2px 3px;`;
const KeyButton = styled.div`grid-row: 1 / 3; display: flex; align-items: center; justify-content: center; gap: 4px; height: 34px; background: #333;`;
const Status = styled.footer`display: flex; align-items: center; justify-content: flex-end; gap: 5px; height: 18px; padding-right: 3px; background: #1a1a1a;`;

/* ---------- overlays ---------- */
const Subtitle = styled.div`
  position: absolute; left: 50%; bottom: 43px; transform: translateX(-50%); display: flex; flex-direction: column; align-items: center;
  padding: 0 2px; background: rgba(38, 40, 41, .78); color: #fff; white-space: nowrap; text-align: center; text-shadow: 0 0 2px #000;
  > p { margin: 0; font: 19px/26px "Noto Sans", sans-serif; } > p + p { font: 19px/26px ${ui}; }
`;
const Channel = styled.div`position: absolute; left: 25px; top: 35px; display: flex; align-items: center; gap: 10px; font: 500 25px/30px ${ui}; color: rgba(255, 255, 255, .8); text-shadow: 0 0 2px rgba(60, 60, 60, .7); white-space: nowrap;`;
const Logo = styled.svg`width: 92px; height: 30px;`;
const Pointer = styled.svg`position: absolute; right: 188px; top: 158px; width: 9px; height: 14px;`;

const Spiral = () => <svg width="32" height="32" viewBox="0 0 32 32"><rect width="32" height="32" fill="#f06a25" /><path d="M0 9C7 2 27 5 27 20c0 5-2 9-5 12" fill="none" stroke="#21140f" strokeWidth="3.4" /><path d="M2 21c-1-10 18-12 19 0 0 9-13 9-13 1 0-5 7-5 7-1 0 1-1 2-2 2" fill="none" stroke="#21140f" strokeWidth="3.200" /><path d="M0 25c1 3 3 5 6 7H0z" fill="#21140f" /></svg>;
const Cog = () => <svg width="30" height="30" viewBox="0 0 30 30"><defs><linearGradient id="cg" x1="0" y1="0" x2="1" y2="1"><stop stopColor="#bbb" /><stop offset="1" stopColor="#777" /></linearGradient></defs><rect width="30" height="30" rx="3" fill="url(#cg)" /><circle cx="15" cy="15" r="7" fill="none" stroke="#fff" strokeWidth="2.4" />{Array.from({ length: 12 }, (_, i) => <path key={i} d="M15 5v3" stroke="#fff" strokeWidth="2.6" transform={`rotate(${i * 30} 15 15)`} />)}</svg>;
const Firefox = () => <svg width="30" height="30" viewBox="0 0 30 30"><path d="M18 1c6 4 10 8 10 15 0 8-6 13-13 13S1 23 1 15c0-5 2-8 4-11l2 4 4-3 2 4z" fill="#ff6a2b" /><path d="M18 1c6 4 11 9 10 17-1-3-3-6-6-6-4-2-6-6-4-11z" fill="#ffd43b" /><circle cx="15" cy="15" r="6.5" fill="#7542d8" /><path d="M1 14c2 7 6 9 11 8 4 0 6-3 5-5-4 2-7-1-7-3l3-1-5-4z" fill="#ff8a2b" /></svg>;
const Files = () => <svg width="30" height="28" viewBox="0 0 30 28"><path d="M0 3q0-2 2-2h9l3 3h14q2 0 2 2v8H0z" fill="#b23a3c" /><rect y="5" width="30" height="22" rx="2" fill="#b7b5b5" /><path d="M11 10h8" stroke="#fff" strokeWidth="2" /></svg>;
const Term = () => <svg width="30" height="26" viewBox="0 0 30 26"><rect width="30" height="26" rx="2" fill="#4b4a4d" stroke="#686868" /><path d="M4 4l4 2-4 2.500M9 10h5" stroke="#fff" strokeWidth="1.4" fill="none" /></svg>;
const Monitor = () => <svg width="30" height="26" viewBox="0 0 30 26"><rect width="30" height="26" rx="2" fill="#444448" stroke="#555" /><path d="M1 15h5l2-7 3 13 3-12 2 9 2-6 2 3h9" stroke="#8f98a5" fill="none" strokeWidth="1.2" /></svg>;
const Disk = () => <svg width="26" height="31" viewBox="0 0 26 31"><rect width="26" height="31" rx="3" fill="#b9b9b9" /><path d="M21 18a8 8 0 11-5-7M21 10v7h-6" fill="none" stroke="#858585" strokeWidth="1.5" /><circle cx="13" cy="18" r="3" fill="#888" /></svg>;
const Obs = () => <svg width="32" height="32" viewBox="0 0 32 32"><circle cx="16" cy="16" r="14.8" fill="#242225" stroke="#f2f2f2" strokeWidth="1.7" />{[0, 120, 240].map(a => <path key={a} d="M16 16c-5-2-5-8-1-11" fill="none" stroke="#d4d4d4" strokeWidth="2.2" transform={`rotate(${a} 16 16)`} />)}</svg>;
const Ssd = () => <svg width="26" height="31" viewBox="0 0 26 31"><rect width="26" height="31" rx="3" fill="#adadad" /><text x="13" y="27" fontSize="10" textAnchor="middle" fill="#858585" fontFamily="Noto Sans">SSD</text></svg>;
const Trash = () => <svg width="26" height="30" viewBox="0 0 26 30"><rect width="26" height="30" rx="3" fill="#bdbabc" /><path d="M3 4h20v3H3z" fill="#fff" /><g fill="none" stroke="#2f9b3a" strokeWidth="2.8">{[0, 120, 240].map(a => <path key={a} d="M10 15l3-4 3 4" transform={`rotate(${a} 13 18)`} />)}</g></svg>;
const Ubuntu = () => <svg width="26" height="26" viewBox="0 0 26 26"><circle cx="13" cy="13" r="8.5" fill="none" stroke="#fff" strokeWidth="3" />{[[4, 13], [17.5, 5], [17.5, 21]].map(([x, y], i) => <circle key={i} cx={x} cy={y} r="4" fill="#fff" stroke="#170e17" strokeWidth="1.5" />)}</svg>;

const dock1 = [["Firefox", Firefox, 1], ["Files", Files, 1], ["Terminal", Term], ["Houdini", Spiral], ["Houdini FX", Spiral], ["System Monitor", Monitor]];
const dock2 = [["Disks", Disk, 1], ["Settings", Cog, 1, 1], ["Tweaks", Cog, 1], ["OBS Studio", Obs, 1], ["SSD", Ssd], ["Trash", Trash]];
const Items = ({ list }) => list.map(([t, C, r, a]) => <DockItem key={t} aria-label={t} $running={r} $active={a}><C /></DockItem>);

const leftStrip = [["ylamp", 0], ["ydia", 0], ["yball", 1], ["arrow", 0, 6], ["lock", 1, 1], ["reddot"], ["greydot"], ["greydot"], ["net"], ["gizmo"], ["magnetg", 0, 5], ["magnetl"], ["magnetd"], ["magnet"], ["view", 1, 4], ["ring"], ["bowl", 0, 1]];
const rightStrip = [["eye"], ["leafy"], ["lock"], ["bulb"], ["ball", 0, 1], ["bulbp", 1], ["bulbw"], ["balls", 1, 2], ["cut"], ["cubes"], ["dot", 0, 2], ["tick"], ["dropper"], ["n12"], ["cone"], ["cone"], ["corner"], ["plane", 1], ["check", 1], ["diamond"], ["pillow"], ["axis"], ["frame"], ["cam", 1], ["tag", 1, 6]];
const boundNames = ["-X", "+X", "-Y", "+Y", "-Z", "+Z"];
const fieldTabs = [["Vis…", 7], ["Multi", 4], ["Den…", 4], ["Tem…", 9], ["Fuel", 5], ["Div…", 6], ["Burn", 6], ["Heat", 4], ["Vel…", 5], ["Col…", 8], ["Sou…", 5], ["Sink", 4]];
const guides = [["Multi Field", false, "#f8f8f6", "1"], ["Density", true, "#fcfcf6", "1"], ["Temperature", false, "#ffffff", "1"], ["Fuel", false, "#d800d8", "0.8"]];
const netIcons = ["wrench", "tree", "list", "ygrid", "dgrid", "photo", "note", "image", "crate", "search", "eyebox"];
const frameX = f => 4 + (f - 1) * 3.8;

export default function App() {
  return (
    <Page>
      <Global />
      <TopBar>
        <Workspaces />
        <Clock><span>Dec 4</span><span>10:38</span></Clock>
        <Tray>
          <TrayIcon $s={12} $gap={14} viewBox="0 0 16 16"><circle cx="8" cy="8" r="6.8" fill="#171717" stroke="#bbb" strokeWidth="1.3" /><path d="M8 8c-3-1-3-4-1-5M8 8c3-1 5 1 5 3M8 8c0 3-2 5-5 4" stroke="#bbb" fill="none" /><circle cx="4" cy="12" r="3" fill="#e03038" /></TrayIcon>
          <TrayIcon $s={11} viewBox="0 0 16 16"><path d="M8 0l7 3v5c0 4-4 7-7 8-3-1-7-4-7-8V3z" fill="#c8c8c8" /><circle cx="11" cy="10" r="4" fill="#3aa757" /></TrayIcon>
          <Recording aria-label="Stop screen sharing"><Svg $s={11} viewBox="0 0 16 16"><rect x="1" y="2" width="14" height="10" rx="1" fill="none" stroke="#fff" strokeWidth="1.5" /><path d="M4 15h8M5 9l4-4 3 2" stroke="#fff" strokeWidth="1.5" fill="none" /></Svg><Svg $s={7} viewBox="0 0 8 8"><rect width="8" height="8" rx="1" fill="#fff" /></Svg></Recording>
          <Language aria-label="Input language">en</Language>
          <TrayIcon $s={11} viewBox="0 0 16 16"><rect x="4" y="0" width="5" height="9" rx="2.5" fill="#b14a33" /><path d="M2 7c0 6 9 6 9 0M6.500 12v3M3 15h7M13 5h2v5h-2z" stroke="#b14a33" fill="none" strokeWidth="1.4" /></TrayIcon>
          <TrayIcon $s={12} viewBox="0 0 16 16"><path d="M0 5c4-4 12-4 16 0l-8 9z" fill="#f0f0f0" /></TrayIcon>
          <TrayIcon $s={12} viewBox="0 0 16 16"><path d="M1 5h3l5-4v14l-5-4H1z" fill="#f0f0f0" /><path d="M11 5c2 2 2 4 0 6M13 3c3 3 3 7 0 10" stroke="#ccc" fill="none" strokeWidth="1.4" /></TrayIcon>
          <TrayIcon $s={13} viewBox="0 0 16 16"><rect x="7" y="2" width="7" height="13" rx="1" fill="#e3e3e3" /><rect x="9" y="0" width="3" height="2" fill="#e3e3e3" /><path d="M4 4L0 9h3l-1 4 4-5H3z" fill="#e3e3e3" /></TrayIcon>
        </Tray>
      </TopBar>
      <Body>
        <Dock aria-label="Dock">
          <Items list={dock1} /><DockRule /><Items list={dock2} />
          <DockEnd><DockItem aria-label="Show applications"><Ubuntu /></DockItem></DockEnd>
        </Dock>
        <AppWindow>
          <TitleBar>
            <Title>/media/anasvfx/0EA5072C0EA5072C/HoudiniProjects/dops tricks/detailing for the course.hip - Houdini FX 20.5.332 - Py3.11</Title>
            <WindowButtons>
              {[["Minimize", "M1 7h6"], ["Restore", "M1 3h4v4H1zM3 3V1h4v4H5"], ["Close", "M1 1l6 6M7 1L1 7"]].map(([t, d]) => <WindowButton key={t} aria-label={t}><Svg $s={6} viewBox="0 0 8 8"><path d={d} stroke="#333" strokeWidth="1.3" fill="none" /></Svg></WindowButton>)}
            </WindowButtons>
          </TitleBar>
          <MenuBar>
            <MenuGroup>{["File", "Edit", "Render", "Assets", "Windows", "Labs"].map(t => <MenuButton key={t}>{t}</MenuButton>)}</MenuGroup>
            <Select label="Desktop" value="Build" icon="frame" $w={76} $mr={6} />
            <Select label="Radial menu" value="Main" icon="desk" $w={84} />
            <Spacer />
            <Select label="Take" value="Main" icon="hat2" $w={112} $mr={7} />
            <IB n="help" label="Help" s={10} />
          </MenuBar>
          <Shelves>
            <ShelfSet tabs={leftTabs} tools={leftTools} pl={7} fill={117} />
            <Grip />
            <ShelfSet tabs={rightTabs} tools={rightTools} fill={19} />
          </Shelves>
          <Panes>
            <Pane>
              <Tabs items={["Scene View", "Animation Editor", "Render View", "Composite View", "Motion FX View", "Geometry Spreadsheet"]} />
              <Path tail={<PathTail><IB n="boxc" s={12} label="Shading" /><IB n="boxb" s={12} label="Display" /><IB n="white" s={11} label="Background" /></PathTail>} />
              <ViewBar>
                <ViewTools><IB n="grid9" s={12} label="Toolbar" /></ViewTools>
                <ViewTools $gap={8} $pr={14}>
                  <IB n="arrowd" label="Select" $w={14} /><IB n="arrowd" label="Select mode" $w={14} /><IB n="path" label="Select path" $w={14} />
                  <ViewTools $gap={2}><IB n="dots" s={12} label="Points" $on $w={14} $h={16} /><IB n="screen" label="Area" $w={14} /></ViewTools>
                  <IB n="faint" label="Grid" $w={14} />
                  <ViewTools $gap={2}><IB n="bug" s={11} label="Debug" $w={14} /><IB n="gearbox" s={11} label="Options" $w={14} /></ViewTools>
                </ViewTools>
                <ViewTools $gap={5} $end><IB n="treeb" label="Layout" /><IB n="help" label="Viewport help" s={10} /></ViewTools>
              </ViewBar>
              <ViewRow>
                <Strip $w={22} $pt={9}>
                  {leftStrip.map(([n, on, mt], i) => <IB key={i} n={n} s={14} $w={17} $h={i < 3 ? 16 : 19} $on={on} $mt={mt} />)}
                  <StripFoot><IB n="cloth" s={12} $w={17} $h={17} /><IB n="disc" s={13} $w={17} $h={17} /></StripFoot>
                </Strip>
                <Viewport>
                  <Scene viewBox="71 159 793 496" preserveAspectRatio="xMidYMid slice">
                    <path d="M334 401L506 383 615 420 418 446zM334 401L340 587 505 554 506 383M615 420L608 622 505 554M418 446L420 669M340 587L421 669 608 622" fill="none" stroke="#fff" strokeWidth="1.1" />
                    <path d="M83 644v-8" stroke="#7bd486" strokeWidth="2" /><path d="M78 646h7" stroke="#3038a0" />
                    <text x="73" y="647" fontSize="8" fontWeight="700" fill="#2530a0" fontFamily="Noto Sans">z</text><text x="84" y="647" fontSize="8" fontWeight="700" fill="#c04040" fontFamily="Noto Sans">x</text>
                  </Scene>
                  <ViewName><Icon n="view" s={17} /><span>View</span></ViewName>
                  <ViewMark><p>更多海外优质教程</p><p>www.cgttg.com</p><p>团课加团长v</p><p>qiqiyu 12138</p></ViewMark>
                  <ViewPills><Pill>Persp ▾</Pill><Pill>No cam ▾</Pill></ViewPills>
                </Viewport>
                <Strip $w={17} $pt={8}>
                  {rightStrip.map(([n, on, mt], i) => <IB key={i} n={n} s={11} $w={14} $h={i < 10 ? 16 : 17} $on={on} $mt={mt} />)}
                  <StripFoot><IB n="warn" s={11} $w={14} $h={17} /><IB n="panes" s={11} $w={14} $h={17} $on /><IB n="eyebox" s={11} $w={14} $h={15} /></StripFoot>
                </Strip>
              </ViewRow>
            </Pane>
            <Pane>
              <ParamPane>
                <Tabs items={["smokeobject1", "Take List", "Performance Monitor"]} />
                <Path />
                <NodeHead><Icon n="hat" s={11} /><label htmlFor="node-name">Smoke Object</label><NameInput id="node-name" defaultValue="smokeobject1" />
                  <HeadTools>{["gear", "brush", "search", "info", "help"].map(n => <IB key={n} n={n} s={10} />)}</HeadTools></NodeHead>
                <ParamBody>
                  <ParamForm>
                    <FolderTabs $mb={3}><FolderTab $on $bold $px={4}>Properties</FolderTab><FolderTab>Creation</FolderTab><FolderTab>Instancing</FolderTab></FolderTabs>
                    <Row><Check type="checkbox" id="two-d" /><RowLabel htmlFor="two-d">Two Dimensional</RowLabel><Fields><Select label="Plane" value="XY plane" $w={67} $h={12} $pad={4} /></Fields></Row>
                    <Row><span /><RowLabel>Division Method</RowLabel><Fields><Select label="Division Method" value="By Size" $w={70} $h={12} $pad={4} /></Fields></Row>
                    <Row><span /><RowLabel htmlFor="div-size">Division Size</RowLabel><Fields><ShortField $b id="div-size" defaultValue="0.1" /><Range type="range" aria-label="Division Size" min="0" max="10" step="0.1" defaultValue="0" /></Fields></Row>
                    <Row><span /><RowLabel htmlFor="size-x">Size</RowLabel><Fields>{["x", "y", "z"].map(a => <Field key={a} $b id={"size-" + a} aria-label={"Size " + a} defaultValue="21.6" />)}</Fields></Row>
                    <Row><span /><RowLabel htmlFor="center-x">Center</RowLabel><Fields>{["x", "y", "z"].map(a => <Field key={a} id={"center-" + a} aria-label={"Center " + a} defaultValue="0" />)}</Fields></Row>
                    <Row $h={14}><span /><span /><Bounds><Check type="checkbox" id="closed" /><BoundTitle htmlFor="closed">Closed Boundaries</BoundTitle>
                      {boundNames.map(b => <Bound key={b}><Check type="checkbox" $dim defaultChecked disabled />{b}</Bound>)}</Bounds></Row>
                    <FolderTabs $mt={6} $mb={4}><FolderTab $on $px={4}>Guides</FolderTab><FolderTab>Initial Data</FolderTab><FolderTab>Fields</FolderTab><FolderTab>Slice</FolderTab></FolderTabs>
                    <FolderTabs $mb={2}><Spacer />{fieldTabs.map(([t, px], i) => <FolderTab key={t} $on={i === 0} $px={px}>{t}</FolderTab>)}<PlainButton $w={8} $fs={6} aria-label="More tabs">▶</PlainButton></FolderTabs>
                    {guides.map(([t, on, c, v]) => (
                      <Row key={t}><Check type="checkbox" id={"g-" + t} defaultChecked={on} /><RowLabel $on={on} htmlFor={"g-" + t}>{t}</RowLabel>
                        <Fields><Swatch $c={c} aria-label={t + " color"} /><Icon n="wheel" s={16} />{[0, 1, 2].map(k => <Field key={k} aria-label={t + " " + k} defaultValue={v} />)}</Fields></Row>
                    ))}
                  </ParamForm>
                  <Scroll><PlainButton $w={8} $fs={5} aria-label="Scroll down">▼</PlainButton></Scroll>
                </ParamBody>
              </ParamPane>
              <NetPane>
                <Tabs items={["/obj/smoke", "Tree View", "Material Palette", "Asset Browser"]} />
                <Path />
                <NetMenu><NetGroup $gap={9}>{["Add", "Edit", "Go", "View", "Tools", "Layout", "Labs", "Help"].map(t => <MenuButton key={t}>{t}</MenuButton>)}</NetGroup><NetGroup $gap={5}>{netIcons.map(n => <IB key={n} n={n} s={11} />)}</NetGroup></NetMenu>
                <Canvas>
                  <Scene viewBox="886 434 394 222" preserveAspectRatio="none"><path d="M886 501L1238 656" stroke="#6a6a85" fill="none" /><path d="M886 551L1158 656" stroke="#585858" fill="none" /></Scene>
                  <Context>Dynamics</Context><NetNode>gasresizefluiddynamic1</NetNode><NetLock><Icon n="lock" s={8} /></NetLock>
                </Canvas>
              </NetPane>
            </Pane>
          </Panes>
          <Playbar>
            <PlayControls>
              <ButtonRow>{["first", "rev", "stop", "play", "last"].map(n => <PlayButton key={n} aria-label={n} $on={n === "stop"}><Icon n={n} s={12} /></PlayButton>)}
                <FrameInput aria-label="Current frame" defaultValue="1" /><PlayButton $w={9} aria-label="Step back"><Icon n="stepb" s={9} /></PlayButton><PlayButton $w={9} aria-label="Step forward"><Icon n="stepf" s={9} /></PlayButton></ButtonRow>
              <ButtonRow>{["flag", "sound", "loop", "clock", "ticks", "slide"].map(n => <PlayButton key={n} aria-label={n}><Icon n={n} s={13} /></PlayButton>)}<PlayButton $dim aria-label="Previous key"><Icon n="dimb" s={8} /></PlayButton><PlayButton $dim aria-label="Next key"><Icon n="dimb" s={8} /></PlayButton></ButtonRow>
            </PlayControls>
            <TimeArea>
              <Ruler viewBox="0 0 912 25" preserveAspectRatio="xMinYMid slice">
                <rect x="4" y="7" width="133" height="6" fill="#1769c0" /><path d="M2 13.500h909" stroke="#777" />
                {Array.from({ length: 40 }, (_, i) => i * 6).filter(f => f > 0).map(f => <path key={f} d={`M${Math.round(frameX(f))} ${f % 24 ? 11 : 9}v${f % 24 ? 5 : 9}`} stroke={f % 24 ? "#555" : "#999"} />)}
                {[24, 48, 72, 96, 120, 144, 168, 192, 216].map(f => <text key={f} x={frameX(f)} y="5" fontSize="7" textAnchor="middle" fill="#888" fontFamily="DejaVu Sans Mono">{f}</text>)}
                <text x="911" y="5" fontSize="7" textAnchor="end" fill="#888" fontFamily="DejaVu Sans Mono">2</text>
                <path d="M2 1h15v10H4L2 13z" fill="#080808" stroke="#a9bbc2" strokeWidth="1.3" /><text x="9" y="9" fontSize="8" textAnchor="middle" fill="#eee" fontFamily="DejaVu Sans Mono">1</text>
              </Ruler>
              <RangeRow><input type="text" aria-label="Start" defaultValue="1" /><input type="text" aria-label="Range start" defaultValue="1" />
                <RangeTrack><span /></RangeTrack><input type="text" aria-label="Range end" defaultValue="240" /><input type="text" aria-label="End" defaultValue="240" /></RangeRow>
            </TimeArea>
            <KeyPanel>
              <KeyButton><Icon n="key" s={14} />▾</KeyButton>
              <Icon n="chan" s={13} /><Select label="Keys" value="0 keys, 0/0 channels" $w={107} $h={14} $pad={10} />
              <Icon n="keybox" s={13} /><Select label="Key mode" value="Key All Channels" $w={107} $h={14} $pad={8} />
            </KeyPanel>
          </Playbar>
          <Status><Icon n="cloud" s={11} /><Select label="Context" value="/obj/smoke" $w={82} $h={13} $pad={6} /><Icon n="refresh" s={12} /><Select label="Update mode" value="Auto Update" $w={75} $h={13} $pad={6} /></Status>
        </AppWindow>
      </Body>
      <Channel><span>爱学习的老土狗</span>
        <Logo viewBox="0 0 92 30" fill="none" stroke="currentColor" strokeWidth="4" strokeLinejoin="round">
          {[0, 47].map(x => <g key={x} transform={`translate(${x} 2)`}><path d="M3 3l2 22c9-1 13-5 14-8-2-3-8-4-14-2M24 12l1 12M31 2l2 21M37 12l1 11M43 2l-1 21" /><path d="M23 5l1 3M36 5l1 3" strokeWidth="3.5" /></g>)}
        </Logo></Channel>
      <Subtitle><p>So let's apply what we said inside Houdini</p><p>那么让我们在Houdini中应用我们所说的内容</p></Subtitle>
      <Pointer viewBox="0 0 9 14" aria-hidden="true"><path d="M1 1v11l2.500-2 1.800 4 2-1-1.700-4H9z" fill="#fff" stroke="#222" strokeWidth=".7" /></Pointer>
    </Page>
  );
}
